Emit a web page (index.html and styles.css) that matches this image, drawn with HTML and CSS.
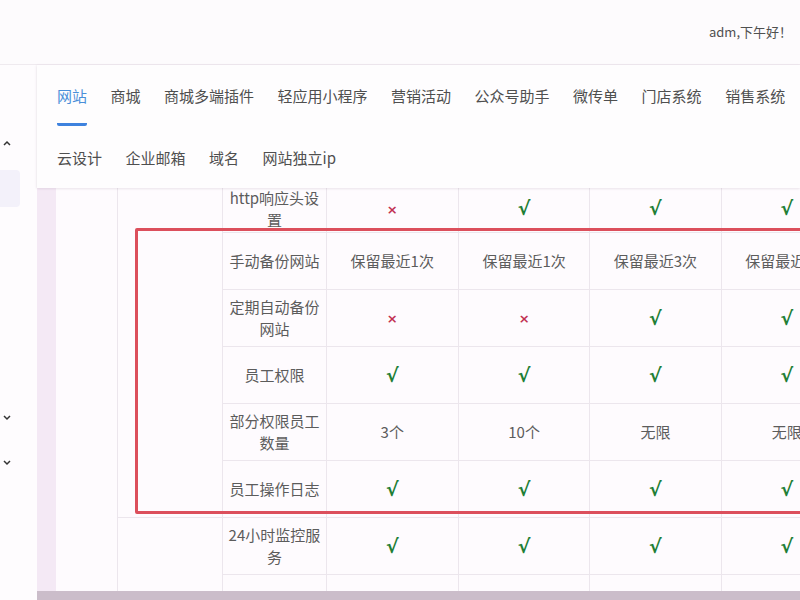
FILE: index.html
```html
<!DOCTYPE html>
<html lang="zh-CN">
<head>
<meta charset="utf-8">
<link rel="stylesheet" href="styles.css">
</head>
<body>
<header class="topbar">
  <span class="greet">adm,下午好！</span>
</header>
<div class="layout">
  <aside class="sidebar">
    <svg class="arrow arrow-up" width="8" height="10" viewBox="0 0 8 10"><polyline points="1,7 4,4 7,7" fill="none" stroke="#333" stroke-width="1.5"/></svg>
    <div class="sb-active"></div>
    <svg class="arrow arrow-down1" width="8" height="10" viewBox="0 0 8 10"><polyline points="1,4 4,7 7,4" fill="none" stroke="#333" stroke-width="1.5"/></svg>
    <svg class="arrow arrow-down2" width="8" height="10" viewBox="0 0 8 10"><polyline points="1,4 4,7 7,4" fill="none" stroke="#333" stroke-width="1.5"/></svg>
  </aside>
  <main class="main">
    <nav class="tabs-card">
      <ul class="tabs">
        <li class="tab active">网站</li>
        <li class="tab">商城</li>
        <li class="tab">商城多端插件</li>
        <li class="tab">轻应用小程序</li>
        <li class="tab">营销活动</li>
        <li class="tab">公众号助手</li>
        <li class="tab">微传单</li>
        <li class="tab">门店系统</li>
        <li class="tab">销售系统</li>
        <li class="tab">云设计</li>
        <li class="tab">企业邮箱</li>
        <li class="tab">域名</li>
        <li class="tab">网站独立ip</li>
      </ul>
    </nav>
    <section class="content">
      <div class="panel">
        <table class="compare">
          <colgroup>
            <col class="c-cat"><col class="c-label"><col class="c-first"><col class="c-data"><col class="c-data"><col class="c-data">
          </colgroup>
          <tbody>
            <tr class="first">
              <td class="cat" rowspan="6"></td>
              <td class="label">http响应头设<br>置</td>
              <td><span class="no">×</span></td>
              <td><span class="yes">√</span></td>
              <td><span class="yes">√</span></td>
              <td><span class="yes">√</span></td>
            </tr>
            <tr>
              <td class="label">手动备份网站</td>
              <td>保留最近1次</td>
              <td>保留最近1次</td>
              <td>保留最近3次</td>
              <td>保留最近5次</td>
            </tr>
            <tr>
              <td class="label">定期自动备份<br>网站</td>
              <td><span class="no">×</span></td>
              <td><span class="no">×</span></td>
              <td><span class="yes">√</span></td>
              <td><span class="yes">√</span></td>
            </tr>
            <tr>
              <td class="label">员工权限</td>
              <td><span class="yes">√</span></td>
              <td><span class="yes">√</span></td>
              <td><span class="yes">√</span></td>
              <td><span class="yes">√</span></td>
            </tr>
            <tr>
              <td class="label">部分权限员工<br>数量</td>
              <td>3个</td>
              <td>10个</td>
              <td>无限</td>
              <td>无限</td>
            </tr>
            <tr>
              <td class="label">员工操作日志</td>
              <td><span class="yes">√</span></td>
              <td><span class="yes">√</span></td>
              <td><span class="yes">√</span></td>
              <td><span class="yes">√</span></td>
            </tr>
            <tr>
              <td class="cat" rowspan="2"></td>
              <td class="label">24小时监控服<br>务</td>
              <td><span class="yes">√</span></td>
              <td><span class="yes">√</span></td>
              <td><span class="yes">√</span></td>
              <td><span class="yes">√</span></td>
            </tr>
            <tr>
              <td class="label"></td>
              <td></td><td></td><td></td><td></td>
            </tr>
          </tbody>
        </table>
        <div class="highlight"></div>
      </div>
      <div class="hscroll"></div>
    </section>
  </main>
</div>
</body>
</html>
```
FILE: styles.css
```css
* { box-sizing: border-box; }
html, body {
  margin: 0;
  padding: 0;
  width: 800px;
  height: 600px;
  overflow: hidden;
  background: #fdfbfd;
  font-family: "Noto Sans CJK SC", "Noto Sans", sans-serif;
  color: #595959;
}
.topbar {
  height: 65px;
  border-bottom: 1px solid #efeaef;
  display: flex;
  align-items: center;
  justify-content: flex-end;
  padding-right: 8px;
  padding-bottom: 2px;
}
.greet {
  font-size: 13px;
  color: #505050;
}
.layout {
  display: flex;
  height: 535px;
}
.sidebar {
  width: 37px;
  flex: none;
  background: #fefcfe;
  display: flex;
  flex-direction: column;
  align-items: flex-start;
}
.arrow { display: block; margin-left: 3px; }
.arrow-up { margin-top: 73px; }
.sb-active {
  margin-top: 22px;
  width: 20px;
  height: 37px;
  background: #f3f1fa;
  border-radius: 0 4px 4px 0;
}
.arrow-down1 { margin-top: 205px; }
.arrow-down2 { margin-top: 35px; }
.main {
  flex: 1;
  min-width: 0;
  min-height: 0;
  display: flex;
  flex-direction: column;
}
.tabs-card {
  position: relative;
  z-index: 1;
  flex: none;
  height: 123px;
  background: #fefdfe;
  box-shadow: 0 1px 2px rgba(120, 100, 120, 0.12), -1px 0 2px rgba(120, 100, 120, 0.06);
  padding: 20px 0 0 20px;
}
.tabs {
  list-style: none;
  margin: 0;
  padding: 0;
  display: flex;
  flex-wrap: wrap;
  column-gap: 23.5px;
  row-gap: 21px;
}
.tab {
  font-size: 15px;
  line-height: 22px;
  color: #4f4f4f;
  padding-bottom: 16px;
  border-bottom: 3px solid transparent;
}
.tab.active {
  color: #4a8fd9;
  border-bottom-color: #3e82de;
  border-radius: 0 0 2px 2px;
}
.content {
  flex: 1;
  min-height: 0;
  display: flex;
  flex-direction: column;
  background: #f4e9f5;
  padding-left: 19px;
}
.panel {
  position: relative;
  flex: 1;
  min-height: 0;
  overflow: hidden;
  background: #fefbfe;
  padding-left: 61px;
}
.compare {
  margin-top: -15px;
  border-collapse: collapse;
  table-layout: fixed;
  width: 736px;
}
.c-cat { width: 105px; }
.c-label { width: 103px; }
.c-first { width: 132px; }
.c-data { width: 131px; }
.compare td {
  border: 1px solid #ece6ed;
  height: 57px;
  padding: 0 4px;
  text-align: center;
  vertical-align: middle;
  font-size: 15px;
  line-height: 22px;
  color: #5c5c5c;
}
.compare tr.first td { height: 59px; padding-top: 11px; }
.compare td.cat { border-top: none; }
.yes {
  font-family: "DejaVu Sans", sans-serif;
  font-weight: bold;
  font-size: 19px;
  color: #1f7f36;
}
.no {
  font-family: "DejaVu Sans", sans-serif;
  font-weight: bold;
  font-size: 13px;
  color: #c23050;
}
.highlight {
  position: absolute;
  left: 79px;
  top: 40px;
  width: 720px;
  height: 286px;
  border: 3px solid #dc4f5c;
  border-radius: 2px;
  pointer-events: none;
}
.hscroll {
  flex: none;
  height: 9px;
  background: #cbbdca;
  margin-left: -19px;
}
```
